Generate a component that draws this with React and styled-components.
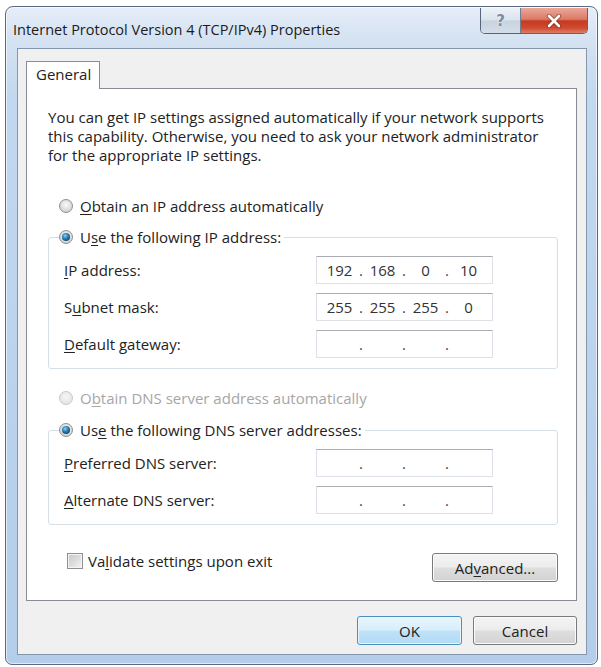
import React from "react";
import styled, { createGlobalStyle } from "styled-components";

const GlobalStyle = createGlobalStyle`
  html, body {
    margin: 0;
    padding: 0;
    background: #ffffff;
  }
  body {
    font-family: "Open Sans", "Noto Sans", "Liberation Sans", sans-serif;
    color: #222222;
  }
  * {
    box-sizing: border-box;
  }
`;

const Screen = styled.div`
  width: 601px;
  height: 667px;
  padding: 6px 3px 0 5px;
`;

const Window = styled.div`
  width: 593px;
  height: 659px;
  display: flex;
  flex-direction: column;
  padding: 0 10px 9px 11px;
  border: 1px solid #5a6a80;
  border-radius: 8px 8px 7px 7px;
  background: linear-gradient(
    180deg,
    #e6eef8 0px,
    #d6e3f2 30px,
    #c2d8ef 90px,
    #b3cdea 100%
  );
  box-shadow: inset 0 0 0 1px rgba(255, 255, 255, 0.6);
`;

const TitleBar = styled.div`
  height: 41px;
  display: flex;
  align-items: flex-start;
  flex-shrink: 0;
`;

const Title = styled.div`
  margin: 13px 0 0 -4px;
  font-size: 14.5px;
  line-height: 20px;
  color: #1b1b1b;
  white-space: nowrap;
`;

const Controls = styled.div`
  margin: 1px -1px 0 auto;
  display: flex;
  height: 26px;
  border: 1px solid #56657b;
  border-top: none;
  border-radius: 0 0 5px 5px;
  overflow: hidden;
`;

const HelpButton = styled.div`
  width: 40px;
  display: flex;
  align-items: center;
  justify-content: center;
  border-right: 1px solid #6f7e93;
  background: linear-gradient(180deg, #eef2f7 0%, #dbe3ed 48%, #c8d3e0 52%, #d4dde8 100%);
  font-family: "DejaVu Sans", sans-serif;
  font-weight: bold;
  font-size: 15px;
  color: #7b8ca3;
  text-shadow: 0 0 2px #ffffff;
`;

const CloseButton = styled.div`
  width: 66px;
  display: flex;
  align-items: center;
  justify-content: center;
  background: linear-gradient(
    180deg,
    #eaa899 0%,
    #dc7a64 45%,
    #c63a21 52%,
    #cf4b31 80%,
    #df7d66 100%
  );
`;

const Client = styled.div`
  flex: 1;
  display: flex;
  flex-direction: column;
  padding: 12px 9px 0 8px;
  background: #f0f0f0;
  border: 1px solid #8597ad;
`;

const TabStrip = styled.div`
  display: flex;
`;

const Tab = styled.div`
  position: relative;
  z-index: 1;
  width: 74px;
  height: 28px;
  margin-bottom: -1px;
  padding: 3px 0 0 9px;
  background: #ffffff;
  border: 1px solid #898c95;
  border-bottom: none;
  font-size: 15px;
  line-height: 19px;
`;

const Panel = styled.div`
  padding: 19px 18px 18px 21px;
  background: #ffffff;
  border: 1px solid #898c95;
`;

const Description = styled.p`
  margin: 0;
  font-size: 15px;
  line-height: 19px;
  white-space: nowrap;
`;

const Key = styled.span`
  text-decoration: underline;
  text-underline-offset: 2px;
  text-decoration-thickness: 1px;
`;

const OptionRow = styled.div`
  display: flex;
  align-items: center;
  height: 20px;
  margin-top: ${(p) => p.$top || 0}px;
  padding-left: 11px;
  font-size: 15px;
  color: ${(p) => (p.$disabled ? "#a6a6a6" : "#222222")};
  white-space: nowrap;
`;

const Radio = styled.span`
  width: 14px;
  height: 14px;
  margin-right: 7px;
  flex-shrink: 0;
  border-radius: 50%;
  display: flex;
  align-items: center;
  justify-content: center;
  border: 1px solid ${(p) => (p.$disabled ? "#c8c8c8" : "#8e8f8f")};
  background: ${(p) =>
    p.$disabled
      ? "radial-gradient(circle at 50% 40%, #f6f6f6, #e6e6e6 70%)"
      : "radial-gradient(circle at 50% 40%, #fbfbfb, #d2d2d2 75%, #e4e4e4)"};

  &::after {
    content: "";
    display: ${(p) => (p.$checked ? "block" : "none")};
    width: 8px;
    height: 8px;
    border-radius: 50%;
    background: radial-gradient(circle at 40% 35%, #8fd3f4 0%, #2a7fb4 40%, #0d3d5e 85%);
  }
`;

const Group = styled.fieldset`
  margin: ${(p) => p.$top || 0}px 0 0 0;
  padding: 9px 0 10px 0;
  min-width: 0;
  border: 1px solid #d5dfe5;
  border-radius: 3px;
`;

const Legend = styled.legend`
  margin-left: 10px;
  padding: 0 3px 0 0;
  height: 20px;
  display: flex;
  align-items: center;
  font-size: 15px;
  white-space: nowrap;
`;

const Fields = styled.div`
  display: grid;
  grid-template-columns: 252px 177px;
  grid-auto-rows: 28px;
  row-gap: 9px;
  align-items: center;
  padding-left: 15px;
  font-size: 15px;
`;

const IpBox = styled.div`
  height: 28px;
  display: grid;
  grid-template-columns: 37px 6px 37px 6px 37px 6px 37px;
  align-items: center;
  padding-left: 4px;
  background: #ffffff;
  border: 1px solid #dde1e7;
  border-top-color: #abadb3;
  font-size: 15px;
  color: #333333;
`;

const Octet = styled.span`
  text-align: center;
`;

const Dot = styled.span`
  text-align: center;
  color: #444444;
`;

const BottomRow = styled.div`
  display: flex;
  align-items: flex-start;
  justify-content: space-between;
  margin-top: 28px;
`;

const CheckLabel = styled.div`
  display: flex;
  align-items: center;
  height: 16px;
  margin: 0 0 0 19px;
  font-size: 15px;
  white-space: nowrap;
`;

const CheckBox = styled.span`
  width: 16px;
  height: 16px;
  margin-right: 5px;
  border: 1px solid #8f8f8f;
  background: linear-gradient(135deg, #c8c8c8 0%, #dcdcdc 50%, #f4f4f4 100%);
  box-shadow: inset 0 0 0 1px #f4f4f4;
`;

const Button = styled.div`
  width: ${(p) => p.$width}px;
  height: 29px;
  display: flex;
  align-items: center;
  justify-content: center;
  border-radius: 3px;
  font-size: 15px;
  color: #222222;
  border: 1px solid ${(p) => (p.$primary ? "#4a8fbe" : "#7a7a7a")};
  background: ${(p) =>
    p.$primary
      ? "linear-gradient(180deg, #e8f5fc 0%, #d8eefb 48%, #bfe2f7 52%, #b0daf3 100%)"
      : "linear-gradient(180deg, #f4f4f4 0%, #ececec 48%, #dedede 52%, #d2d2d2 100%)"};
  box-shadow: inset 0 0 0 1px ${(p) => (p.$primary ? "#eaf6fd" : "#fbfbfb")};
`;

const Footer = styled.div`
  display: flex;
  justify-content: flex-end;
  gap: 11px;
  margin-top: 15px;
`;

const CloseGlyph = () => (
  <svg width="16" height="14" viewBox="0 0 16 14">
    <path d="M3 2 L13 12 M13 2 L3 12" stroke="#5a1e12" strokeWidth="4.4" strokeLinecap="round" opacity="0.55" />
    <path d="M3 2 L13 12 M13 2 L3 12" stroke="#ffffff" strokeWidth="2.6" strokeLinecap="round" />
  </svg>
);

const IpField = ({ value }) => {
  const parts = value ? value.split(".") : ["", "", "", ""];
  return (
    <IpBox>
      {parts.map((part, i) => (
        <React.Fragment key={i}>
          {i > 0 && <Dot>.</Dot>}
          <Octet>{part}</Octet>
        </React.Fragment>
      ))}
    </IpBox>
  );
};

const App = () => {
  return (
    <Screen>
      <GlobalStyle />
      <Window>
        <TitleBar>
          <Title>Internet Protocol Version 4 (TCP/IPv4) Properties</Title>
          <Controls>
            <HelpButton>?</HelpButton>
            <CloseButton>
              <CloseGlyph />
            </CloseButton>
          </Controls>
        </TitleBar>

        <Client>
          <TabStrip>
            <Tab>General</Tab>
          </TabStrip>
          <Panel>
            <Description>
              You can get IP settings assigned automatically if your network supports
              <br />
              this capability. Otherwise, you need to ask your network administrator
              <br />
              for the appropriate IP settings.
            </Description>

            <OptionRow $top={31}>
              <Radio />
              <span>
                <Key>O</Key>btain an IP address automatically
              </span>
            </OptionRow>

            <Group $top={11}>
              <Legend>
                <Radio $checked />
                <span>
                  U<Key>s</Key>e the following IP address:
                </span>
              </Legend>
              <Fields>
                <span>
                  <Key>I</Key>P address:
                </span>
                <IpField value="192.168.0.10" />
                <span>
                  S<Key>u</Key>bnet mask:
                </span>
                <IpField value="255.255.255.0" />
                <span>
                  <Key>D</Key>efault gateway:
                </span>
                <IpField />
              </Fields>
            </Group>

            <OptionRow $top={19} $disabled>
              <Radio $disabled />
              <span>
                O<Key>b</Key>tain DNS server address automatically
              </span>
            </OptionRow>

            <Group $top={12}>
              <Legend>
                <Radio $checked />
                <span>
                  Us<Key>e</Key> the following DNS server addresses:
                </span>
              </Legend>
              <Fields>
                <span>
                  <Key>P</Key>referred DNS server:
                </span>
                <IpField />
                <span>
                  <Key>A</Key>lternate DNS server:
                </span>
                <IpField />
              </Fields>
            </Group>

            <BottomRow>
              <CheckLabel>
                <CheckBox />
                <span>
                  Va<Key>l</Key>idate settings upon exit
                </span>
              </CheckLabel>
              <Button $width={126}>
                <span>
                  Ad<Key>v</Key>anced...
                </span>
              </Button>
            </BottomRow>
          </Panel>

          <Footer>
            <Button $width={105} $primary>
              OK
            </Button>
            <Button $width={104}>Cancel</Button>
          </Footer>
        </Client>
      </Window>
    </Screen>
  );
};

export default App;
